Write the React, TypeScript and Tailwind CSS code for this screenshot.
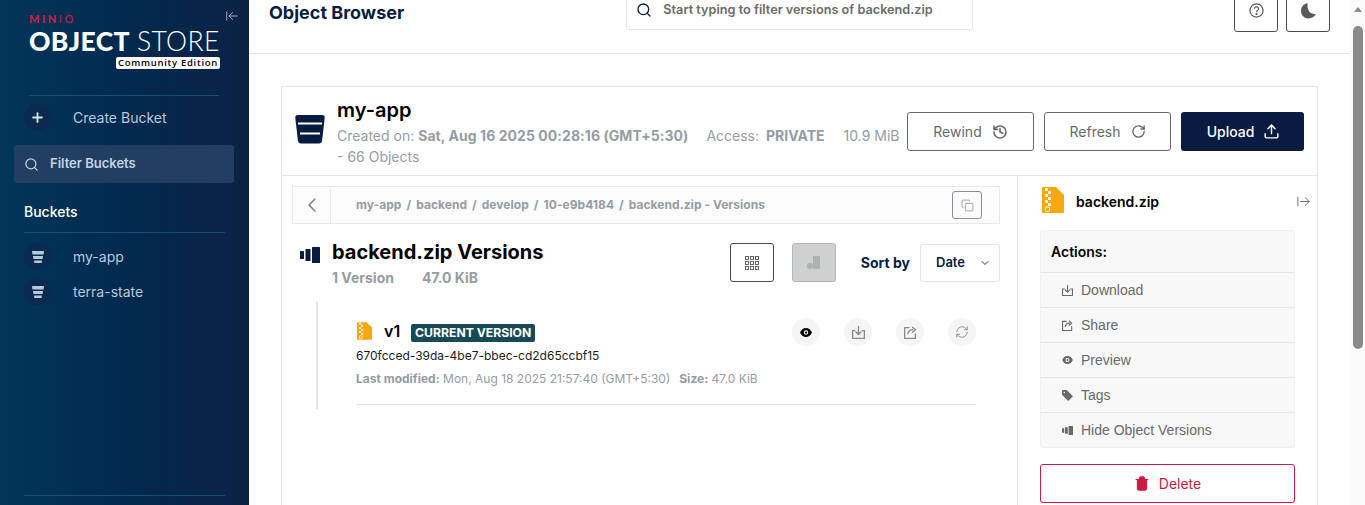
import React from "react";
import { ArrowLeftToLine, ArrowRightFromLine, ChevronDown, ChevronLeft, Copy, History, Plus, RefreshCw, RotateCw, Search, Trash2, Upload } from "lucide-react";

function BucketIcon({ className }: { className?: string }) {
  return (
    <svg viewBox="0 0 30 30" className={className}>
      <path d="M3 1h24q3 0 2.700 3l-2.600 22.500q-.4 3-3 3H5.900q-2.600 0-3-3L.3 4Q0 1 3 1z" fill="currentColor" />
      <rect x="3" y="8.500" width="24" height="2" fill="#fff" />
      <rect x="5" y="18.500" width="20" height="2" fill="#fff" />
    </svg>
  );
}

function SmallBucket() {
  return (
    <svg viewBox="0 0 12 12" className="w-3 h-3 text-[#b8c9de]">
      <path d="M0 0h12l-.4 3.500H.4z M1 5h10l-.4 3H1.400z M2 9.500h8l-.4 2.500H2.400z" fill="currentColor" />
    </svg>
  );
}

function ZipIcon({ className }: { className?: string }) {
  return (
    <svg viewBox="0 0 22 26" className={className}>
      <path d="M1 0h13l8 8v17a1 1 0 0 1-1 1H1a1 1 0 0 1-1-1V1a1 1 0 0 1 1-1z" fill="#f5a80f" />
      <path d="M3 1h3v3H3z M6 4h3v3H6z M3 7h3v3H3z M6 10h3v3H6z M3 13h3v3H3z M6 16h3v3H6z" fill="#fff" fillOpacity="0.8" />
      <rect x="3.500" y="20" width="4" height="4.500" rx="1" fill="none" stroke="#fff" strokeWidth="1" />
    </svg>
  );
}

function VersionsIcon({ className }: { className?: string }) {
  return (
    <svg viewBox="0 0 20 16" className={className}>
      <rect x="0" y="4" width="4" height="8" rx="0.500" fill="currentColor" />
      <rect x="5.500" y="2" width="5" height="12" rx="0.500" fill="currentColor" />
      <rect x="12" y="0" width="8" height="16" rx="0.500" fill="currentColor" />
    </svg>
  );
}

function GridIcon() {
  return (
    <svg viewBox="0 0 14 14" className="w-[14px] h-[14px] text-[#555]" fill="none" stroke="currentColor" strokeWidth="0.900">
      {[0.5, 5.5, 10.5].map((y) =>
        [0.5, 5.5, 10.5].map((x) => <rect key={`${x}-${y}`} x={x} y={y} width="3" height="3" />)
      )}
    </svg>
  );
}

function EyeSolid({ className }: { className?: string }) {
  return (
    <svg viewBox="0 0 16 12" className={className}>
      <path fillRule="evenodd" d="M8 0c3.600 0 6.500 2.400 8 6-1.500 3.600-4.400 6-8 6S1.500 9.600 0 6c1.500-3.600 4.400-6 8-6zm0 3a3 3 0 1 0 0 6 3 3 0 0 0 0-6z" fill="currentColor" />
      <circle cx="8" cy="6" r="1.500" fill="currentColor" />
    </svg>
  );
}

function TrayDown({ className }: { className?: string }) {
  return (
    <svg viewBox="0 0 14 14" className={className} fill="none" stroke="currentColor" strokeWidth="1.400">
      <path d="M7 0v9 M3.800 6l3.200 3.200L10.200 6" />
      <path d="M3.500 5H.7v8.300h12.600V5h-2.800" />
    </svg>
  );
}

function ShareBox({ className }: { className?: string }) {
  return (
    <svg viewBox="0 0 14 14" className={className} fill="none" stroke="currentColor" strokeWidth="1.400">
      <path d="M6 1.700H.7v11.600h11.600V8" />
      <path d="M4 9c.4-3 2.500-5 6-5 M8.800 1l3.500 3-3.500 3" />
    </svg>
  );
}

function TagSolid({ className }: { className?: string }) {
  return (
    <svg viewBox="0 0 14 14" className={className}>
      <path fillRule="evenodd" d="M0 1a1 1 0 0 1 1-1h5l8 8-6 6-8-8zm3 1.200a1 1 0 1 0 0 2 1 1 0 0 0 0-2z" fill="currentColor" />
    </svg>
  );
}

function SideItem({ label }: { label: string }) {
  return (
    <div className="flex items-center h-[27px] mb-2 pl-6">
      <div className="w-[27px] h-[27px] rounded-full bg-[#0a2a50] flex items-center justify-center">
        <SmallBucket />
      </div>
      <span className="ml-[22px] text-[14px] text-[#b8c9de]">{label}</span>
    </div>
  );
}

function Sidebar() {
  return (
    <aside className="relative w-[249px] h-full shrink-0 bg-linear-to-r from-[#03365a] via-[#02294f] to-[#0c2245] text-white flex flex-col">
      <ArrowLeftToLine className="absolute left-[225px] top-[9px] w-[14px] h-[14px] text-[#b4c2d2]" strokeWidth={1.5} />
      <div className="pl-[29px] w-[220px] pt-[12px] h-[95px]">
        <div className="text-[11px] leading-[13px] tracking-[2.500px] text-[#d01c44]" style={{ fontFamily: "Lato, sans-serif" }}>
          <span className="font-black">MIN</span>
          <span className="font-normal">IO</span>
        </div>
        <div className="text-[26.500px] leading-[32px] tracking-[0.350px] whitespace-nowrap" style={{ fontFamily: "Lato, sans-serif" }}>
          <span className="font-black">OBJECT</span> <span className="font-light">STORE</span>
        </div>
        <div className="flex justify-end">
          <span className="bg-white text-black rounded-[2px] h-[12px] w-[104px] flex items-center justify-center text-[9.500px] font-semibold tracking-[0.700px] whitespace-nowrap" style={{ fontFamily: "'Open Sans', sans-serif" }}>
            Community Edition
          </span>
        </div>
      </div>
      <div className="mx-[29px] mr-[30px] h-px bg-[#12507a]" />
      <div className="flex items-center pl-6 mt-[8px] h-[27px]">
        <div className="w-[27px] h-[27px] rounded-full bg-[#0a2a50] flex items-center justify-center">
          <Plus className="w-[15px] h-[15px] text-[#d5dfeb]" strokeWidth={3} />
        </div>
        <span className="ml-[22px] text-[14px] text-[#b8c9de]">Create Bucket</span>
      </div>
      <div className="ml-[14px] mr-[15px] mt-[14px] h-[38px] rounded-[3px] bg-[#223e60] flex items-center pl-[10px]">
        <Search className="w-[15px] h-[15px] text-[#c5d2e0]" strokeWidth={2} />
        <span className="ml-[11px] text-[13px] font-semibold text-[#c5d4e4]">Filter Buckets</span>
      </div>
      <div className="pl-6 mt-[20px] text-[14px] leading-[17px] font-medium">Buckets</div>
      <div className="mx-6 mt-[12px] h-px bg-[#12507a]" />
      <div className="mt-[10px]">
        <SideItem label="my-app" />
        <SideItem label="terra-state" />
      </div>
      <div className="mx-6 mt-auto mb-[9px] h-px bg-[#12507a]" />
    </aside>
  );
}

function Header() {
  return (
    <header className="h-[54px] shrink-0 border-b border-[#e5e5e5] flex items-start pl-5 pr-5">
      <h1 className="text-[18px] leading-[26px] font-bold text-[#081c42]">Object Browser</h1>
      <div className="ml-[222px] -mt-[10px] w-[347px] h-[40px] border border-[#e5e5e5] rounded-[3px] flex items-center pl-[9px]">
        <Search className="w-[16px] h-[16px] text-[#081c42]" strokeWidth={2} />
        <span className="ml-[11px] text-[12.700px] font-semibold text-[#6b6b6b] whitespace-nowrap">Start typing to filter versions of backend.zip</span>
      </div>
      <div className="ml-auto flex gap-2 -mt-3">
        <button className="w-[44px] h-[44px] border border-[#4a4a4a] rounded-[3px] flex items-center justify-center">
          <svg viewBox="0 0 16 16" className="w-[15px] h-[15px] text-[#5a5a5a]" fill="none" stroke="currentColor" strokeWidth="1.300">
            <circle cx="8" cy="8" r="7" />
            <path d="M5.800 6.200a2.200 2.200 0 1 1 3.400 1.900c-.8.500-1.200.9-1.200 1.700" />
            <circle cx="8" cy="11.800" r="0.500" fill="currentColor" />
          </svg>
        </button>
        <button className="w-[44px] h-[44px] border border-[#4a4a4a] rounded-[3px] flex items-center justify-center">
          <svg viewBox="0 0 16 18" className="w-[15px] h-[17px] text-[#5a5a5a]">
            <path d="M7 1C3 2 0 5 0 9.500 0 14 3.500 17.500 8 17.500c3.500 0 6.500-2 8-5-5 1.500-10-3-9-11.500z" fill="currentColor" />
          </svg>
        </button>
      </div>
    </header>
  );
}

function BucketHead() {
  return (
    <div className="h-[89px] shrink-0 border-b border-[#e5e5e5] flex items-start">
      <BucketIcon className="w-[30px] h-[30px] ml-[13px] mt-[27px] text-[#081c42]" />
      <div className="ml-[12px] mt-[11px]">
        <div className="text-[20px] leading-[24px] font-semibold text-black">my-app</div>
        <div className="mt-[3px] text-[14px] leading-[21px] text-[#969ca3] w-[570px]">
          Created on: <b className="font-bold tracking-[0.06px]">Sat, Aug 16 2025 00:28:16 (GMT+5:30)</b>
          <span className="ml-[18px]">Access:</span> <b className="font-bold ml-[3px]">PRIVATE</b>
          <span className="ml-[19px]">10.9 MiB</span>
          <div>- 66 Objects</div>
        </div>
      </div>
      <div className="ml-auto flex gap-[10px] mt-[25px] mr-[13px]">
        <button className="w-[127px] h-[39px] border border-[#696969] rounded-[3px] flex items-center justify-center gap-[10px] text-[14px] text-[#696969]">
          Rewind <History className="w-[16px] h-[16px]" strokeWidth={2.400} />
        </button>
        <button className="w-[127px] h-[39px] border border-[#696969] rounded-[3px] flex items-center justify-center gap-[10px] text-[14px] text-[#696969]">
          Refresh <RotateCw className="w-[15px] h-[15px]" strokeWidth={2.200} />
        </button>
        <button className="w-[123px] h-[39px] pl-[2px] bg-[#081c42] rounded-[3px] flex items-center justify-center gap-[9px] text-[14px] font-medium text-white">
          Upload <Upload className="w-[17px] h-[17px]" strokeWidth={2} />
        </button>
      </div>
    </div>
  );
}

function Breadcrumbs() {
  const parts = ["my-app", "backend", "develop", "10-e9b4184", "backend.zip - Versions"];
  return (
    <div className="h-[38px] w-[708px] border border-[#eaeaea] bg-[#fcfcfc] flex items-center">
      <div className="w-[38px] h-full border-r border-[#eaeaea] flex items-center justify-center">
        <ChevronLeft className="w-[24px] h-[24px] text-[#7a8088]" strokeWidth={1.500} />
      </div>
      <div className="ml-[25px] flex text-[12px] font-bold tracking-[0.04px] text-[#969ca3] whitespace-nowrap">
        {parts.map((p, i) => (
          <span key={p}>
            {i > 0 && <span className="mx-[5px]">/</span>}
            {p}
          </span>
        ))}
      </div>
      <button className="ml-auto mr-[17px] w-[30px] h-[28px] border border-[#8a9098] rounded-[3px] flex items-center justify-center">
        <Copy className="w-[13px] h-[13px] text-[#8a9098]" strokeWidth={1.500} />
      </button>
    </div>
  );
}

function VersionToolbar() {
  return (
    <div className="flex items-start mt-[19px] w-[708px]">
      <VersionsIcon className="w-5 h-4 ml-2 mt-[4px] text-[#081c42]" />
      <div className="ml-3 -mt-[3px]">
        <div className="text-[20px] leading-[24px] font-bold text-black">backend.zip Versions</div>
        <div className="mt-[4px] text-[14px] leading-[20px] font-bold text-[#969ca3]">
          1 Version<span className="ml-7">47.0 KiB</span>
        </div>
      </div>
      <div className="ml-auto flex items-center">
        <button className="w-[44px] h-[39px] border border-[#4a4a4a] rounded-[3px] flex items-center justify-center">
          <GridIcon />
        </button>
        <button className="ml-[18px] w-[44px] h-[39px] border border-[#b5b5b5] bg-[#cfd0d0] rounded-[3px] flex items-center justify-center">
          <svg viewBox="0 0 14 14" className="w-[14px] h-[14px]" fill="#b0b0b0">
            <rect x="6" y="0" width="7" height="13" />
            <circle cx="3" cy="10" r="3" />
          </svg>
        </button>
        <span className="ml-[25px] text-[14px] font-bold text-[#081c42]">Sort by</span>
        <div className="ml-[10px] w-[80px] h-[38px] border border-[#e5e5e5] rounded-[3px] flex items-center pl-[15px] pr-2 justify-between text-[13px] font-semibold text-[#081c42]">
          Date
          <ChevronDown className="w-[12px] h-[12px] text-[#333]" strokeWidth={2} />
        </div>
      </div>
    </div>
  );
}

function RoundBtn({ children }: { children: React.ReactNode }) {
  return <div className="w-[28px] h-[28px] rounded-full bg-[#f5f5f5] flex items-center justify-center text-[#8a8a8a]">{children}</div>;
}

function VersionRow() {
  return (
    <div className="mt-[13px] ml-[24px] w-[660px] h-[108px] border-l-2 border-[#e5e5e5] pl-[38px]">
      <div className="border-b border-[#e2e2e2] h-[104px]">
        <div className="flex items-center pt-[17px]">
          <ZipIcon className="w-[15px] h-[18px] ml-px -mt-[2px] shrink-0" />
          <span className="ml-[12px] -mt-[2px] text-[16px] leading-[20px] font-semibold text-black">v1</span>
          <span className="ml-[11px] mt-[2px] h-[18px] w-[124px] bg-[#174a56] rounded-[2px] flex items-center justify-center text-[12.200px] font-bold text-white whitespace-nowrap">CURRENT VERSION</span>
          <div className="ml-auto flex gap-6">
            <RoundBtn><EyeSolid className="w-[12px] h-[9px] text-black" /></RoundBtn>
            <RoundBtn><TrayDown className="w-[13px] h-[13px]" /></RoundBtn>
            <RoundBtn><ShareBox className="w-[13px] h-[13px]" /></RoundBtn>
            <RoundBtn><RefreshCw className="w-[14px] h-[14px]" strokeWidth={1.500} /></RoundBtn>
          </div>
        </div>
        <div className="mt-px text-[12px] leading-[18px] text-[#1c1c1c]">670fcced-39da-4be7-bbec-cd2d65ccbf15</div>
        <div className="mt-[5px] text-[12px] leading-[18px] text-[#969ca3]">
          <b className="font-bold">Last modified:</b> Mon, Aug 18 2025 21:57:40 (GMT+5:30)
          <b className="font-bold ml-[9px]">Size:</b> 47.0 KiB
        </div>
      </div>
    </div>
  );
}

function ActionRow({ icon, label }: { icon: React.ReactNode; label: string }) {
  return (
    <div className="h-[35px] border-t border-[#e5e5e5] flex items-center pl-[21px] text-[#696969] text-[14px]" style={{ fontFamily: "'Liberation Sans', sans-serif" }}>
      <span className="w-[19px] flex items-center">{icon}</span>
      {label}
    </div>
  );
}

function Details() {
  return (
    <div className="w-[300px] shrink-0 border-l border-[#e5e5e5] pl-[22px] pr-[22px]">
      <div className="relative h-[54px] flex items-center">
        <ZipIcon className="w-[22px] h-[26px] ml-[2px] -mt-[6px]" />
        <span className="ml-[12px] -mt-[4px] text-[14px] font-semibold text-black">backend.zip</span>
        <ArrowRightFromLine className="absolute left-[256px] top-[18px] w-[15px] h-[15px] text-[#666]" strokeWidth={1.500} />
      </div>
      <div className="bg-[#f8f8f8] border border-[#f0f0f0] rounded-[3px]">
        <div className="h-[41px] flex items-center pl-[10px] text-[14px] font-semibold text-black">Actions:</div>
        <ActionRow icon={<TrayDown className="w-[11px] h-[11px]" />} label="Download" />
        <ActionRow icon={<ShareBox className="w-[11px] h-[11px]" />} label="Share" />
        <ActionRow icon={<EyeSolid className="w-[11px] h-[8px]" />} label="Preview" />
        <ActionRow icon={<TagSolid className="w-[11px] h-[11px]" />} label="Tags" />
        <ActionRow icon={<VersionsIcon className="w-[11px] h-[9px]" />} label="Hide Object Versions" />
      </div>
      <button className="mt-4 w-full h-[39px] border border-[#c51b44] rounded-[3px] flex items-center justify-center gap-[9px] text-[14px] text-[#c51b44]">
        <Trash2 className="w-[16px] h-[17px]" fill="currentColor" strokeWidth={1.500} />
        Delete
      </button>
    </div>
  );
}

export default function App() {
  return (
    <div className="w-[1365px] h-[505px] overflow-hidden flex bg-white" style={{ fontFamily: "Inter, sans-serif" }}>
      <Sidebar />
      <main className="flex-1 min-w-0 flex flex-col">
        <Header />
        <div className="mt-8 ml-8 mr-[32px] flex-1 min-h-0 border border-b-0 border-[#e5e5e5] flex flex-col">
          <BucketHead />
          <div className="flex flex-1 min-h-0">
            <div className="flex-1 min-w-0 pl-[10px] pt-[10px]">
              <Breadcrumbs />
              <VersionToolbar />
              <VersionRow />
            </div>
            <Details />
          </div>
        </div>
      </main>
      <div className="w-[15px] shrink-0 bg-[#fbfbfb] flex flex-col items-center">
        <svg viewBox="0 0 8 5" className="w-2 h-[5px] mt-[7px] text-[#8a8a8a]"><path d="M4 0l4 5H0z" fill="currentColor" /></svg>
        <div className="mt-[14px] w-[10px] h-[323px] rounded-full bg-[#8a8a8a]" />
      </div>
    </div>
  );
}
